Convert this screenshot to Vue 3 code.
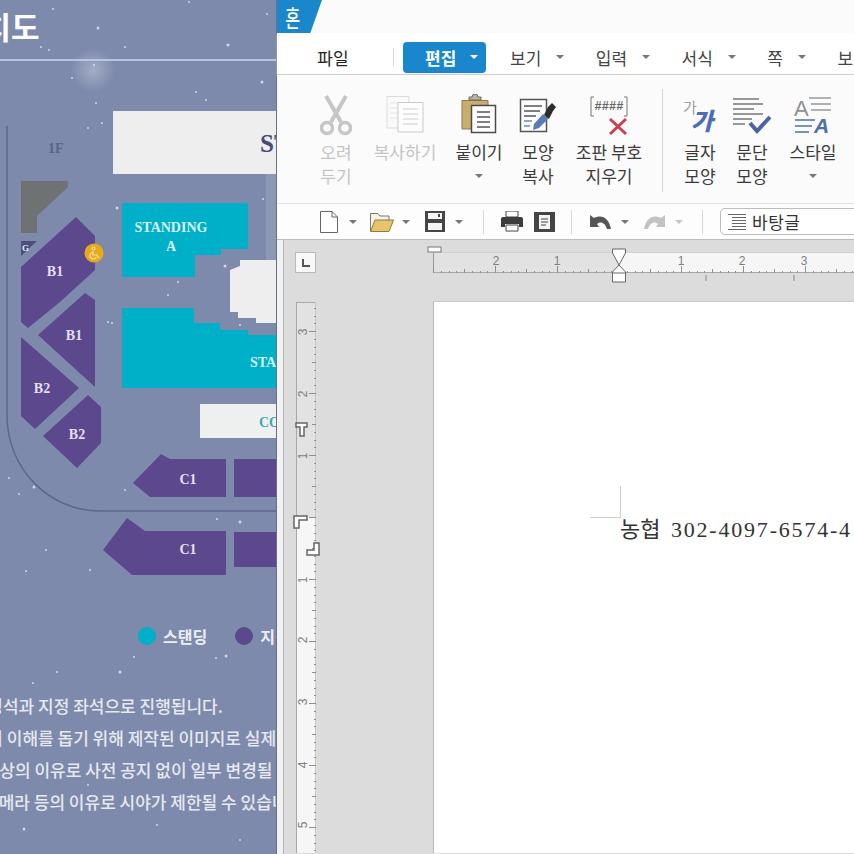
<template>
  <div class="screen">
    <!-- seat map poster behind the editor -->
    <section class="poster">
      <svg class="stars" width="276" height="854" viewBox="0 0 276 854">
        <defs>
          <radialGradient id="glow">
            <stop offset="0" stop-color="#c3cbe0" stop-opacity="0.55" />
            <stop offset="1" stop-color="#c3cbe0" stop-opacity="0" />
          </radialGradient>
        </defs>
        <circle cx="93" cy="70" r="22" fill="url(#glow)" />
        <circle v-for="(s, i) in stars" :key="i" :cx="s[0]" :cy="s[1]" :r="s[2] || 1" fill="#e4e8f4" opacity="0.8" />
      </svg>

      <div class="poster-head"><h1>배치도</h1></div>
      <div class="poster-rule"></div>

      <svg class="seatmap" width="276" height="539" viewBox="0 61 276 539">
        <path d="M7 126V415C7 470 50 511 100 511H276" fill="none" stroke="#5d678f" stroke-width="1.5" />
        <rect x="113" y="111" width="163" height="63" fill="#eeeeee" />
        <rect x="266" y="174" width="10" height="88" fill="#8d97b6" />
        <polygon points="240,260 276,260 276,323 256,323 256,318 238,318 238,312 230,312 230,270 240,266" fill="#eeeeee" />
        <text x="260" y="152" class="serif" font-size="25" fill="#4a4a78">ST</text>
        <text x="48" y="153" class="serif" font-size="14" fill="#5a628a">1F</text>

        <polygon points="122,203 248,203 248,249 221,249 221,255 195,255 195,277 122,277" fill="#00afc8" />
        <polygon points="122,308 194,308 194,323 220,323 220,330 248,330 248,335 276,335 276,388 122,388" fill="#00afc8" />
        <text x="171" y="232" class="serif label-teal" text-anchor="middle">STANDING</text>
        <text x="171" y="251" class="serif label-teal" text-anchor="middle">A</text>
        <text x="250" y="367" class="serif label-teal">STA</text>
        <rect x="200" y="404" width="76" height="34" fill="#eef0f0" />
        <text x="259" y="427" class="serif" font-size="14" fill="#3fa9ae">CO</text>

        <polygon points="21,181 68,181 68,187 37,216 37,233 21,233" fill="#6e7273" />
        <polygon points="21,241 37,241 21,256" fill="#4c4f7e" />
        <text x="22" y="251" class="serif" font-size="9" fill="#e8e8f2">G</text>

        <polygon
          v-for="(p, i) in seats"
          :key="i"
          :points="p"
          fill="#5c488c"
        />
        <text
          v-for="l in seatLabels"
          :key="l.x + '-' + l.y"
          :x="l.x"
          :y="l.y"
          class="serif label-seat"
          text-anchor="middle"
        >{{ l.t }}</text>

        <circle cx="94" cy="253" r="9.5" fill="#e8a91c" />
        <path d="M92 248.5a1.5 1.5 0 1 1 3 0a1.5 1.5 0 1 1-3 0M93 251v4h4l2 3M92 252.5a3.4 3.4 0 1 0 4.5 4.5" fill="none" stroke="#f9e3a1" stroke-width="1.2" />
      </svg>

      <div class="legend">
        <i class="dot teal"></i><span class="legend-a">스탠딩</span>
        <i class="dot purple"></i><span>지정석</span>
      </div>

      <div class="notes">
        <p class="n1">스탠딩석과 지정 좌석으로 진행됩니다.</p>
        <p class="n2">관객의 이해를 돕기 위해 제작된 이미지로 실제와 다를 수</p>
        <p class="n3">제작상의 이유로 사전 공지 없이 일부 변경될 수 있습니다</p>
        <p class="n4">카메라 등의 이유로 시야가 제한될 수 있습니다</p>
      </div>
    </section>

    <!-- word processor -->
    <section class="editor">
      <div class="titlebar">
        <div class="logo"><span>혼</span></div>
      </div>

      <nav class="menu">
        <span class="menu-file">파일</span>
        <i class="menu-sep"></i>
        <button class="menu-active">편집<i class="caret white"></i></button>
        <span v-for="m in menus" :key="m" class="menu-item">{{ m }}<i class="caret"></i></span>
        <span class="menu-item">보안</span>
      </nav>

      <div class="ribbon">
        <div class="rb w64 off">
          <svg class="rb-icon" width="36" height="43" viewBox="0 0 36 43">
            <g fill="none" stroke="#c6c6c6">
              <path d="M8 2L23 28M28 2L13 28" stroke-width="4" />
              <circle cx="9" cy="34" r="5.5" stroke-width="3.5" />
              <circle cx="27" cy="34" r="5.5" stroke-width="3.5" />
            </g>
          </svg>
          <span>오려</span><span>두기</span>
        </div>
        <div class="rb w74 off">
          <svg class="rb-icon" width="40" height="43" viewBox="0 0 40 43">
            <path d="M2 2.500H24V34H2Z" fill="#fafafa" stroke="#dcdcdc" />
            <path d="M5 9H20M5 14H20M5 19H20M5 24H20" stroke="#e6e6e6" />
            <path d="M13 8.500H38V38H13Z" fill="#fdfdfd" stroke="#c9c9c9" />
            <path d="M18 15H33M18 20H33M18 25H33M18 30H33" stroke="#cdcdcd" />
          </svg>
          <span>복사하기</span>
        </div>
        <div class="rb w74">
          <svg class="rb-icon" width="38" height="43" viewBox="0 0 38 43">
            <path d="M2 6.500H28V35H2Z" fill="#c9ad6c" stroke="#8b7a4e" />
            <path d="M9 6V3H12A3 3 0 0 1 18 3H21V6Z" fill="#b9b2a0" stroke="#6f6a5c" />
            <path d="M11.500 11.500H35.500V38.500H11.500Z" fill="#fff" stroke="#4b4b4b" stroke-width="1.500" />
            <path d="M17 18H30M17 23H30M17 28H30M17 33H30" stroke="#555" stroke-width="1.300" />
          </svg>
          <span>붙이기</span><i class="caret"></i>
        </div>
        <div class="rb w44">
          <svg class="rb-icon" width="38" height="43" viewBox="0 0 38 43">
            <path d="M1.500 5.500H27.500V37.500H1.500Z" fill="#fff" stroke="#555" stroke-width="1.500" />
            <path d="M5 12H23M5 17H21M5 22H17" stroke="#555" stroke-width="1.300" />
            <path d="M5 27H13M5 32H11" stroke="#6b86c4" stroke-width="1.300" />
            <path d="M14 36L15 30L24 20L29 25L20 34Z" fill="#5b7ab8" />
            <path d="M25 21L29 13L33 9L37 13L34 17L30 25Z" fill="#2d2d2d" />
          </svg>
          <span>모양</span><span>복사</span>
        </div>
        <div class="rb w98">
          <svg class="rb-icon" width="38" height="43" viewBox="0 0 38 43">
            <path d="M4 3H1V22H4M34 3H37V22H34" fill="none" stroke="#777" />
            <text x="19" y="16" text-anchor="middle" class="hash">####</text>
            <path d="M20 25L36 40M36 25L20 40" stroke="#c8404f" stroke-width="3" />
          </svg>
          <span>조판 부호</span><span>지우기</span>
        </div>
        <i class="rb-sep"></i>
        <div class="rb w56">
          <svg class="rb-icon" width="36" height="43" viewBox="0 0 36 43">
            <text x="1" y="19" class="glyph-gray">가</text>
            <text x="9" y="36" class="glyph-blue">가</text>
          </svg>
          <span>글자</span><span>모양</span>
        </div>
        <div class="rb w48">
          <svg class="rb-icon" width="40" height="43" viewBox="0 0 40 43">
            <path d="M1 5H27M1 10H31M1 15H22M1 20H31M1 25H20M1 30H13" stroke="#777" stroke-width="1.500" />
            <path d="M18 29L25 37L38 23" fill="none" stroke="#4a63a8" stroke-width="4" />
          </svg>
          <span>문단</span><span>모양</span>
        </div>
        <div class="rb w74">
          <svg class="rb-icon" width="38" height="43" viewBox="0 0 38 43">
            <text x="0" y="22" class="a-gray">A</text>
            <path d="M15 4H37M17 10H37M17 16H37" stroke="#999" stroke-width="1.500" />
            <path d="M1 26H21M1 32H18M1 38H15" stroke="#4f6fa8" stroke-width="1.500" />
            <text x="20" y="39" class="a-blue">A</text>
          </svg>
          <span>스타일</span><i class="caret"></i>
        </div>
      </div>

      <div class="toolbar">
        <svg width="18" height="22" viewBox="0 0 18 22">
          <path d="M.5.500H12L17.500 6V21.500H.5Z" fill="#fff" stroke="#666" />
          <path d="M12 .5V6H17.500" fill="none" stroke="#666" />
        </svg>
        <i class="caret ml-11"></i>
        <svg class="ml-13" width="24" height="20" viewBox="0 0 24 20">
          <path d="M.5 19V1.500H8L10 4H19V8" fill="#f7f3e6" stroke="#777" />
          <path d="M.5 19.500L5 8H23.500L19 19.500Z" fill="#e6c46e" stroke="#8f7a44" />
        </svg>
        <i class="caret ml-8"></i>
        <svg class="ml-15" width="20" height="21" viewBox="0 0 20 21">
          <path d="M0 0H20V21H0Z" fill="#454545" />
          <path d="M3 2H17V8H3Z" fill="#f4f4f4" />
          <path d="M13 3H15V6H13Z" fill="#454545" />
          <path d="M3 12H17V19H3Z" fill="#f4f4f4" />
        </svg>
        <i class="caret ml-10"></i>
        <i class="tb-sep ml-20"></i>
        <svg class="ml-17" width="22" height="21" viewBox="0 0 22 21">
          <path d="M5 0H17V6H5Z" fill="#fff" stroke="#444" />
          <path d="M2 6H20Q22 6 22 8V16H18V13H4V16H0V8Q0 6 2 6Z" fill="#3d3d3d" />
          <path d="M5 14H17V20H5Z" fill="#fff" stroke="#444" />
        </svg>
        <svg class="ml-11" width="21" height="20" viewBox="0 0 21 20">
          <path d="M0 0H21V20H0Z" fill="#454545" />
          <path d="M5 3H16V17H5Z" fill="#f4f4f4" />
          <path d="M7 7H14M7 10H14M7 13H12" stroke="#444" />
        </svg>
        <i class="tb-sep ml-16"></i>
        <svg class="ml-18" width="21" height="14" viewBox="0 0 21 14">
          <path d="M0 0V12H9L7 9C10 6 15 7 17 14H21C19 3 12-1 4 3Z" fill="#565656" />
        </svg>
        <i class="caret ml-10"></i>
        <svg class="ml-15" width="21" height="14" viewBox="0 0 21 14">
          <path d="M21 0V12H12L14 9C11 6 6 7 4 14H0C2 3 9-1 17 3Z" fill="#c2c2c2" />
        </svg>
        <i class="caret faint ml-10"></i>
        <i class="tb-sep ml-19"></i>
        <div class="style-box ml-17">
          <svg width="18" height="18" viewBox="0 0 18 18">
            <path d="M0 1.500H18M4 4.500H18M4 7.500H18M4 10.500H18M4 13.500H18M0 16.500H18" stroke="#666" />
          </svg>
          <span>바탕글</span>
        </div>
      </div>

      <div class="workspace">
        <div class="edge"></div>
        <div class="sheet-grid">
          <div class="corner"><i></i></div>
          <svg class="hruler" width="421" height="21" viewBox="0 0 421 21">
            <rect width="186" height="21" fill="#e2e2e2" />
            <rect x="186" width="235" height="21" fill="#f6f6f6" />
            <path d="M.5 0V21" stroke="#999" />
            <path d="M0 .5H421" stroke="#d0d0d0" />
            <path d="M0 20.500H421" stroke="#a8a8a8" />
            <path v-for="t in hTicks" :key="t.x" :d="`M${t.x} 21V${21 - t.h}`" stroke="#8f8f8f" />
            <text v-for="n in hNums" :key="n.x" :x="n.x" y="13" text-anchor="middle" class="ruler-num">{{ n.t }}</text>
            <rect x="-5" y="-5" width="13" height="5" fill="#fff" stroke="#777" />
            <path d="M179.500 -3H192.500V1L186 13L192.500 20V30H179.500V20L186 13L179.500 1Z" fill="#fff" stroke="#666" />
            <path d="M179.500 21H192.500" stroke="#666" />
            <path d="M273 23V29M361 23V29" stroke="#888" />
          </svg>
          <svg class="vruler" width="24" height="551" viewBox="0 0 24 551">
            <rect x="0" width="20" height="215" fill="#e2e2e2" />
            <rect x="0" y="215" width="20" height="336" fill="#f6f6f6" />
            <path d="M.5 0V551M.5 .5H20" stroke="#a8a8a8" />
            <path d="M19.500 0V551" stroke="#c8c8c8" />
            <path v-for="t in vTicks" :key="t.y" :d="`M20 ${t.y}H${20 - t.h}`" stroke="#8f8f8f" />
            <text
              v-for="n in vNums"
              :key="n.y"
              :x="7"
              :y="n.y"
              :transform="`rotate(-90 7 ${n.y})`"
              text-anchor="middle"
              dominant-baseline="central"
              class="ruler-num"
            >{{ n.t }}</text>
            <path d="M0 121H11V125H8V134H4V125H0Z" fill="#fff" stroke="#666" stroke-width="1.500" />
            <path d="M-2 214H11V218H3V226H-2Z" fill="#fff" stroke="#666" stroke-width="1.500" />
            <path d="M23 241V253H11V248H18V241Z" fill="#fff" stroke="#666" stroke-width="1.500" />
          </svg>
          <div class="paper">
            <div class="crop"></div>
            <p class="doc-line"><span class="doc-ko">농협</span> <span class="doc-num">302-4097-6574-4</span></p>
          </div>
        </div>
      </div>
    </section>
  </div>
</template>

<script setup>
const menus = ['보기', '입력', '서식', '쪽']

const stars = [
  [53, 9], [98, 28, 1.5], [125, 47], [189, 2], [228, 45, 1.5], [267, 14], [49, 50], [41, 47],
  [94, 65], [72, 78], [262, 82, 1.5], [196, 92], [206, 100], [96, 103], [88, 128], [102, 123],
  [117, 208, 1.5], [263, 199], [225, 266, 1.5], [178, 282], [168, 295], [108, 322], [112, 323],
  [240, 325], [146, 322], [9, 478], [34, 487, 1.5], [19, 494], [125, 490], [217, 519], [240, 522, 1.5],
  [46, 550], [26, 571], [90, 570], [134, 657], [226, 656, 1.5], [120, 672, 1.5], [57, 672], [33, 683],
  [216, 658], [24, 829, 1.5], [157, 825], [190, 760], [10, 800], [88, 785], [240, 840]
]

const seats = [
  '21,267 76,217 95,236 95,270 60,302 28,328 21,322',
  '85,293 95,300 95,387 38,335',
  '21,337 79,388 35,429 21,416',
  '88,395 101,407 101,443 77,468 43,436',
  '133,483 161,454 170,459 226,459 226,497 150,497',
  '234,459 276,459 276,497 234,497',
  '103,550 127,518 145,531 226,531 226,575 132,575',
  '234,532 276,532 276,567 234,567'
]

const seatLabels = [
  { t: 'B1', x: 55, y: 276 },
  { t: 'B1', x: 74, y: 340 },
  { t: 'B2', x: 42, y: 393 },
  { t: 'B2', x: 77, y: 439 },
  { t: 'C1', x: 188, y: 484 },
  { t: 'C1', x: 188, y: 554 }
]

// 62px per inch, small mark every eighth
const unit = 62
const hTicks = []
for (let i = -24; i <= 32; i++) {
  const x = Math.round(186 + (i * unit) / 8) + 0.5
  if (x < 0 || x > 421) continue
  hTicks.push({ x, h: i % 8 === 0 ? 7 : i % 4 === 0 ? 4 : 2 })
}
const hNums = [
  { t: 2, x: 63 }, { t: 1, x: 124 }, { t: 1, x: 248 }, { t: 2, x: 309 }, { t: 3, x: 371 }
]

const vTicks = []
for (let i = -27; i <= 44; i++) {
  const y = Math.round(215 + (i * unit) / 8) + 0.5
  if (y < 0 || y > 551) continue
  vTicks.push({ y, h: i % 8 === 0 ? 7 : i % 4 === 0 ? 4 : 2 })
}
const vNums = [
  { t: 3, y: 30 }, { t: 2, y: 92 }, { t: 1, y: 154 }, { t: 1, y: 278 },
  { t: 2, y: 338 }, { t: 3, y: 400 }, { t: 4, y: 463 }, { t: 5, y: 523 }
]
</script>

<style scoped>
.screen {
  display: flex;
  width: 854px;
  height: 854px;
  overflow: hidden;
  font-family: 'Noto Sans CJK KR', 'Noto Sans', sans-serif;
}

.poster {
  position: relative;
  flex: 0 0 276px;
  height: 854px;
  overflow: hidden;
  background: #7e8aac;
  color: #eceef4;
}
.stars {
  position: absolute;
  inset: 0;
}
.poster-head {
  height: 59px;
  overflow: hidden;
}
.poster-head h1 {
  position: relative;
  margin: 4px 0 0 -46px;
  font-size: 31px;
  font-weight: 700;
  line-height: 44px;
  white-space: nowrap;
  color: #fff;
}
.poster-rule {
  height: 2px;
  background: #b6c4e4;
}
.seatmap {
  position: relative;
  display: block;
}
.serif {
  font-family: 'Liberation Serif', serif;
  font-weight: 700;
}
.label-teal {
  font-size: 14px;
  fill: #d8f3f5;
}
.label-seat {
  font-size: 14px;
  fill: #e6dff0;
}

.legend {
  position: relative;
  display: flex;
  align-items: center;
  height: 72px;
  padding-left: 138px;
  font-size: 16px;
  font-weight: 700;
  white-space: nowrap;
}
.dot {
  flex: none;
  width: 18px;
  height: 18px;
  margin-right: 7px;
  border-radius: 50%;
}
.dot.teal { background: #00afc8; }
.dot.purple { background: #5c488c; }
.legend-a { margin-right: 28px; }

.notes {
  position: relative;
  padding-top: 18px;
  font-size: 17px;
  font-weight: 500;
  white-space: nowrap;
  color: #e6e8ef;
}
.notes p {
  height: 32px;
  margin: 0;
  line-height: 32px;
}
.notes .n1 { margin-left: -44px; }
.notes .n2 { margin-left: -44px; }
.notes .n3 { margin-left: -32px; }
.notes .n4 { margin-left: -17px; }

.editor {
  flex: 1;
  display: flex;
  flex-direction: column;
  min-width: 0;
  height: 854px;
  border-left: 1px solid #66728c;
  background: #fbfbfb;
  color: #333;
}

.titlebar {
  height: 33px;
  background: #fbfbfb;
}
.logo {
  width: 45px;
  height: 33px;
  display: flex;
  align-items: center;
  padding-left: 7px;
  box-sizing: border-box;
  border-bottom-right-radius: 6px;
  background: #1a87cc;
  clip-path: polygon(0 0, 100% 0, 74% 100%, 0 100%);
}
.logo span {
  display: block;
  font-size: 19px;
  font-weight: 500;
  line-height: 1;
  color: #fff;
  transform: scale(0.85, 1.2);
}

.menu {
  display: flex;
  align-items: center;
  height: 42px;
  padding: 7px 0 0 40px;
  box-sizing: border-box;
  border-bottom: 1px solid #cfcfcf;
  box-shadow: 0 1px 2px #e4e4e4;
  background: #fff;
  font-size: 17px;
  white-space: nowrap;
}
.menu-file { flex: none; width: 32px; text-align: center; color: #222; }
.menu-sep {
  flex: none;
  width: 1px;
  height: 18px;
  margin: 0 9px 0 44px;
  background: #d8d8d8;
}
.menu-active {
  display: flex;
  flex: none;
  align-items: center;
  justify-content: space-between;
  width: 83px;
  height: 31px;
  margin-right: 24px;
  padding: 0 8px 0 22px;
  border: 0;
  border-radius: 4px;
  background: #1a87cc;
  color: #fff;
  font: inherit;
  font-weight: 700;
}
.menu-item {
  display: flex;
  flex: none;
  align-items: center;
  margin-right: 31.5px;
  color: #444;
}
.menu-item .caret { margin-left: 15px; }

.caret {
  display: inline-block;
  flex: none;
  width: 0;
  height: 0;
  border: 4px solid transparent;
  border-top: 4px solid #777;
  border-bottom: 0;
}
.caret.white { border-top-color: #fff; }
.caret.faint { border-top-color: #c4c4c4; }

.ribbon {
  display: flex;
  height: 128px;
  padding: 19px 0 0 27px;
  box-sizing: border-box;
  background: #fbfbfb;
  font-size: 17px;
  line-height: 24px;
  white-space: nowrap;
  color: #3a3a3a;
}
.rb {
  display: flex;
  flex: none;
  flex-direction: column;
  align-items: center;
}
.rb-icon { display: block; margin-bottom: 3px; }
.rb .caret { margin-top: 10px; }
.rb.off { color: #c4c4c4; }
.w44 { width: 44px; }
.w48 { width: 48px; }
.w56 { width: 56px; }
.w64 { width: 64px; }
.w74 { width: 74px; }
.w98 { width: 98px; }
.rb-sep {
  flex: none;
  width: 1px;
  height: 103px;
  margin: -5px 9px 0 4px;
  background: #d4d4d4;
}
.hash {
  font-family: 'Liberation Mono', monospace;
  font-size: 12px;
  font-weight: 700;
  fill: #666;
}
.glyph-gray {
  font-size: 15px;
  fill: #a0a0a0;
}
.glyph-blue {
  font-size: 24px;
  font-weight: 900;
  font-style: italic;
  fill: #4f6cb4;
}
.a-gray {
  font-family: 'Liberation Sans', sans-serif;
  font-size: 22px;
  fill: #909090;
}
.a-blue {
  font-family: 'Liberation Sans', sans-serif;
  font-size: 21px;
  font-weight: 700;
  font-style: italic;
  fill: #4f6fa8;
}

.toolbar {
  display: flex;
  align-items: center;
  height: 37px;
  padding-left: 43px;
  border-top: 1px solid #e2e2e2;
  border-bottom: 1px solid #bcbcbc;
  box-sizing: border-box;
  background: #fdfdfd;
}
.toolbar svg { flex: none; display: block; }
.tb-sep {
  flex: none;
  width: 1px;
  height: 24px;
  background: #d8d8d8;
}
.ml-8 { margin-left: 8px; }
.ml-10 { margin-left: 10px; }
.ml-11 { margin-left: 11px; }
.ml-13 { margin-left: 13px; }
.ml-15 { margin-left: 15px; }
.ml-16 { margin-left: 16px; }
.ml-17 { margin-left: 17px; }
.ml-18 { margin-left: 18px; }
.ml-19 { margin-left: 19px; }
.ml-20 { margin-left: 20px; }
.style-box {
  display: flex;
  flex: none;
  align-items: center;
  gap: 6px;
  width: 160px;
  height: 27px;
  padding-left: 7px;
  border: 1px solid #bcbcbc;
  border-radius: 5px;
  box-sizing: border-box;
  background: #fff;
  font-size: 17px;
  letter-spacing: 0.5px;
  color: #333;
}

.workspace {
  flex: 1;
  display: flex;
  min-height: 0;
  background: #dcdcdc;
}
.edge {
  flex: none;
  width: 6px;
  border-right: 1px solid #b4b4b4;
  background: #f2f2f2;
}
.sheet-grid {
  flex: 1;
  display: grid;
  grid-template-columns: 20px 117px 421px;
  grid-template-rows: 21px 551px;
  row-gap: 29px;
  padding: 12px 0 0 12px;
  min-width: 0;
  overflow: hidden;
}
.corner {
  display: flex;
  align-items: center;
  justify-content: center;
  margin-left: -1px;
  border: 1px solid #b8b8b8;
  background: #f8f8f8;
}
.corner i {
  width: 6px;
  height: 6px;
  margin-left: 1px;
  border-left: 2px solid #555;
  border-bottom: 2px solid #555;
}
.hruler {
  grid-column: 3;
  overflow: visible;
}
.vruler {
  grid-column: 1;
  overflow: visible;
}
.ruler-num {
  font-family: 'Liberation Sans', sans-serif;
  font-size: 12px;
  fill: #808080;
}
.paper {
  grid-column: 3;
  position: relative;
  height: 552px;
  margin-top: -1px;
  border-top: 1px solid #c8c8c8;
  border-left: 1px solid #b8b8b8;
  box-sizing: border-box;
  background: #fff;
  padding: 184px 0 0 186px;
}
.crop {
  width: 30px;
  height: 31px;
  margin-left: -30px;
  border-right: 1px solid #cfcfcf;
  border-bottom: 1px solid #cfcfcf;
}
.doc-line {
  margin: -3px 0 0;
  font-size: 22px;
  line-height: 24px;
  white-space: nowrap;
  color: #333;
}
.doc-ko {
  display: inline-block;
  width: 46px;
}
.doc-num {
  font-family: 'Liberation Serif', serif;
  letter-spacing: 1.8px;
}
</style>

<style>
html, body {
  margin: 0;
  overflow: hidden;
}
</style>
